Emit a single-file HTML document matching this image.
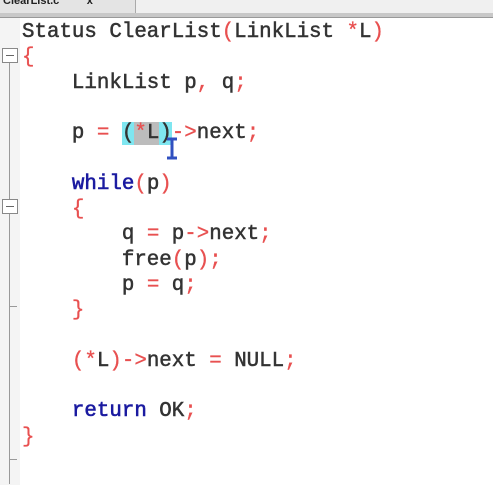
<!DOCTYPE html>
<html><head><style>
body{margin:0;width:493px;height:485px;overflow:hidden;background:#fff;position:relative;font-family:"Liberation Mono",monospace;}
.tabbar{position:absolute;left:0;top:0;width:493px;height:13px;background:#f0f0f0;}
.tab{position:absolute;left:0;top:0;width:135px;height:13px;background:#e4e4e4;border-right:1px solid #aaa;font:bold 11px "Liberation Sans",sans-serif;color:#222;line-height:2px;overflow:hidden}
.sep{position:absolute;left:0;top:13px;width:493px;height:4px;background:#c8c8c8;border-bottom:1px solid #999}
.gut{position:absolute;left:0;top:18px;width:20px;height:467px;background:#f4f4f4}
.vl{position:absolute;left:9px;width:1px;background:#999}
.box{position:absolute;left:2px;width:14px;height:13px;border:1px solid #888;background:#fff}
.box:after{content:"";position:absolute;left:3px;top:6px;width:8px;height:1px;background:#666}
.hl{position:absolute;left:9px;width:8px;height:1px;background:#999}
pre{position:absolute;left:22px;top:20px;margin:0;font:normal 20.8px/25.3px "Liberation Mono",monospace;color:#333;-webkit-text-stroke:0.5px #333}
.k{color:#1a1aa0;-webkit-text-stroke:0.6px #1a1aa0}.r{color:#e85050;-webkit-text-stroke:0.3px #e85050}
.sel1{background:#7fe6f0}.sel2{background:#bcbcbc}
</style></head><body>
<div class="tabbar"><div class="tab">&nbsp;ClearList.c &nbsp;&nbsp;&nbsp;&nbsp;&nbsp;&nbsp;&nbsp;&nbsp;x</div></div>
<div class="sep"></div>
<div class="gut"></div>
<div class="box" style="top:48px"></div>
<div class="vl" style="top:63px;height:137px"></div>
<div class="box" style="top:199px"></div>
<div class="vl" style="top:214px;height:270px"></div>
<div class="hl" style="top:306px"></div>
<div class="hl" style="top:459px"></div>
<pre>Status ClearList<span class="r">(</span>LinkList <span class="r">*</span>L<span class="r">)</span>
<span class="r">{</span>
    LinkList p<span class="r">,</span> q<span class="r">;</span>

    p <span class="r">=</span> <span class="sel1">(<span class="sel2"><span class="r">*</span>L</span>)</span><span class="r">-&gt;</span>next<span class="r">;</span>

    <span class="k">while</span><span class="r">(</span>p<span class="r">)</span>
    <span class="r">{</span>
        q <span class="r">=</span> p<span class="r">-&gt;</span>next<span class="r">;</span>
        free<span class="r">(</span>p<span class="r">);</span>
        p <span class="r">=</span> q<span class="r">;</span>
    <span class="r">}</span>

    <span class="r">(*</span>L<span class="r">)-&gt;</span>next <span class="r">=</span> NULL<span class="r">;</span>

    <span class="k">return</span> OK<span class="r">;</span>
<span class="r">}</span></pre>
<svg style="position:absolute;left:164px;top:137px" width="16" height="24"><path d="M3 2h10M3 21h10M8 2v19" stroke="#3050c0" stroke-width="3" fill="none"/></svg>
</body></html>
